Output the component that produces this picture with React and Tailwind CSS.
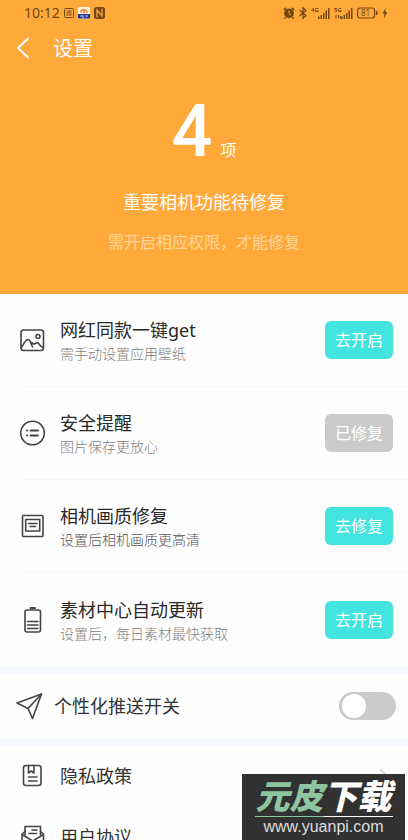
import { useState } from "react";

const lineProps = {
  fill: "none",
  stroke: "currentColor",
  strokeWidth: 1.6,
  strokeLinecap: "round",
  strokeLinejoin: "round",
};

function ImageIcon() {
  return (
    <svg width="26" height="26" viewBox="0 0 26 26" {...lineProps}>
      <rect x="1" y="3" width="22.500" height="20.500" rx="2.500" />
      <circle cx="18" cy="9.500" r="2" />
      <path d="M2 20C4 16 5.500 12.500 8 12.500S11 17 12.500 20M10.700 16C12 14.500 13 17.500 14.500 17S16.500 15 18 16S20.500 20 23 20.500" />
    </svg>
  );
}

function ListIcon() {
  return (
    <svg width="26" height="26" viewBox="0 0 26 26" {...lineProps}>
      <circle cx="12.500" cy="13" r="11.800" />
      <path d="M10.500 10.500H18M10.500 15.500H18" strokeWidth="1.900" />
      <path d="M7 10.500H7.200M7 15.500H7.200" strokeWidth="1.900" />
    </svg>
  );
}

function FrameIcon() {
  return (
    <svg width="26" height="26" viewBox="0 0 26 26" {...lineProps}>
      <rect x="2.500" y="2.500" width="20.500" height="21" rx="1" />
      <rect x="5.700" y="6.500" width="14" height="11.500" />
      <path d="M8.500 10.500H17M10 13.500H15.500" />
    </svg>
  );
}

function BatteryIcon() {
  return (
    <svg width="26" height="26" viewBox="0 0 26 26" {...lineProps}>
      <rect x="5" y="3" width="15.500" height="22" rx="2" />
      <path d="M10.500 1H15" strokeWidth="2" />
      <path d="M7.500 14.500H18M7.500 18H18M7.500 21.500H18" />
    </svg>
  );
}

function SendIcon() {
  return (
    <svg width="28" height="28" viewBox="0 0 28 28" {...lineProps}>
      <path d="M1 11L25.500 2L16.500 26.500L12 16.500Z" />
      <path d="M12 16.500L25.500 2" />
    </svg>
  );
}

function PolicyIcon() {
  return (
    <svg width="26" height="26" viewBox="0 0 26 26" {...lineProps}>
      <rect x="3.500" y="2.500" width="17.500" height="20" rx="2.500" />
      <path d="M8.500 2.500V10L11.200 8L14 10V2.500M8.500 14H17M8.500 18H17" />
    </svg>
  );
}

function LetterIcon() {
  return (
    <svg width="26" height="26" viewBox="0 0 26 26" {...lineProps}>
      <path d="M5 11V2.500H20.500V11M9 9.500H16.500M12 6H17" />
      <path d="M5 7.500L2 10V23.500H23.500V10L20.500 7.500M2 10.500L12.700 17L23.500 10.500" />
    </svg>
  );
}

function Signal({ label, lower }) {
  return (
    <svg width="19" height="12" viewBox="0 0 19 12" fill="currentColor">
      <text x="0" y="5" fontSize="6" fontWeight="700">
        {label}
      </text>
      {lower && <path d="M1 9.500L2.500 7.500V11.500H1.500V9.500ZM4 8H5V11.500H4ZM6 9H7V11.500H6Z" />}
      <path d="M7 9.500H8.500V12H7ZM9.500 8H11V12H9.500ZM12 6H13.500V12H12ZM14.500 3.500H16V12H14.500ZM17 1H18.500V12H17Z" />
    </svg>
  );
}

function StatusBar() {
  return (
    <div className="flex h-6 items-center justify-between pl-6 pr-5 pt-[2px] text-[#754710]">
      <div className="flex items-center gap-1">
        <span className="text-sm leading-5">10:12</span>
        <svg width="10" height="10" viewBox="0 0 10 10" fill="none" stroke="currentColor">
          <rect x="0.500" y="0.500" width="9" height="9" rx="1" />
          <path d="M2 3H8M2 5H8M2 7H8M4 2V8M6 2V8" strokeWidth="0.600" />
        </svg>
        <svg width="12" height="12" viewBox="0 0 12 12">
          <rect width="12" height="12" rx="1" fill="#fff3e2" />
          <path d="M2 5.500C2 2 4 3 4.500 1.500C6 3 8 1 8 3C10 3 10 5 9.500 6Z" fill="#ef8c42" />
          <circle cx="4.500" cy="4.500" r="0.700" fill="#fff" />
          <circle cx="7.500" cy="4.500" r="0.700" fill="#fff" />
          <rect y="7" width="12" height="4.500" fill="#25308e" />
          <path d="M2 9H4M5 8V11M7 9H10" stroke="#fff" strokeWidth="0.800" />
        </svg>
        <svg width="11" height="12" viewBox="0 0 11 12">
          <rect width="11" height="12" rx="2.500" fill="currentColor" />
          <path d="M3 10.500V3L8 9V1.500" fill="none" stroke="#ffa93b" strokeWidth="1.200" />
        </svg>
      </div>
      <div className="flex items-center gap-1">
        <svg width="12" height="12" viewBox="0 0 12 12">
          <circle cx="6" cy="6.300" r="4.900" fill="currentColor" />
          <path
            d="M0.700 3L3 0.900M11.300 3L9 0.900M2.500 10.500L1.500 11.700M9.500 10.500L10.500 11.700"
            stroke="currentColor"
            strokeWidth="1.600"
          />
          <path d="M6 3.500V6.500L8 8" fill="none" stroke="#ffa93b" />
        </svg>
        <svg width="8" height="12" viewBox="0 0 8 12" fill="none" stroke="currentColor" strokeWidth="1.200">
          <path d="M0.500 3L7 8.500L4 11.300V0.700L7 3.500L0.500 9" />
        </svg>
        <Signal label="4G" />
        <Signal label="5G" lower />
        <svg width="21" height="12" viewBox="0 0 21 12" fill="none" stroke="currentColor">
          <rect x="0.600" y="1" width="17" height="10" rx="2.500" strokeWidth="1.200" />
          <path d="M19.800 4V8" strokeWidth="1.500" />
          <text x="4" y="9" fontSize="8" fill="currentColor" stroke="none">
            81
          </text>
        </svg>
        <svg width="6" height="10" viewBox="0 0 6 10" fill="currentColor">
          <path d="M3.500 0L0.500 5.500H2.500L2 10L5.500 4.200H3.500Z" />
        </svg>
      </div>
    </div>
  );
}

const features = [
  { icon: ImageIcon, title: "网红同款一键get", desc: "需手动设置应用壁纸", action: "去开启" },
  { icon: ListIcon, title: "安全提醒", desc: "图片保存更放心", action: "已修复", done: true },
  { icon: FrameIcon, title: "相机画质修复", desc: "设置后相机画质更高清", action: "去修复", dark: true },
  { icon: BatteryIcon, title: "素材中心自动更新", desc: "设置后，每日素材最快获取", action: "去开启" },
];

const links = [
  { icon: PolicyIcon, title: "隐私政策" },
  { icon: LetterIcon, title: "用户协议" },
];

function FeatureRow({ item }) {
  const Icon = item.icon;
  return (
    <li className="ml-5 flex h-[93px] items-center border-b border-[#f7f7f7] pr-[15px] last:border-0">
      <Icon />
      <div className="ml-[14px] flex-1 pt-1">
        <h3 className="text-lg leading-6 text-[#292929]">{item.title}</h3>
        <p
          className={
            item.dark
              ? "text-sm leading-6 font-light text-[#555555]"
              : "text-sm leading-6 font-light text-[#808080]"
          }
        >
          {item.desc}
        </p>
      </div>
      <button
        type="button"
        className={
          item.done
            ? "h-[38px] w-[68px] rounded-md bg-[#cbcbcb] text-base text-white"
            : "h-[38px] w-[68px] rounded-md bg-[#43e4df] text-base text-white"
        }
      >
        {item.action}
      </button>
    </li>
  );
}

export default function App() {
  const [push, setPush] = useState(false);

  return (
    <div className="relative h-screen overflow-hidden bg-[#fefefe] font-['Noto_Sans','Noto_Sans_CJK_SC',sans-serif] text-[#444444]">
      <header className="h-[294px] bg-[#ffa93b] text-white">
        <StatusBar />
        <div className="flex h-12 items-center pl-4">
          <button type="button" aria-label="返回" className="mr-[22px]">
            <svg
              width="15"
              height="22"
              viewBox="0 0 15 22"
              fill="none"
              stroke="currentColor"
              strokeWidth="2"
              strokeLinecap="round"
              strokeLinejoin="round"
            >
              <path d="M12 1.500L2 11L12 20.500" />
            </svg>
          </button>
          <h1 className="pt-[2px] text-xl">设置</h1>
        </div>
        <div className="flex flex-col items-center">
          <p className="mt-5 flex items-baseline gap-2">
            <span className="font-[Roboto] text-7xl leading-20 font-medium">4</span>
            <span className="text-base">项</span>
          </p>
          <h2 className="mt-4 text-lg leading-7">重要相机功能待修复</h2>
          <p className="mt-3 text-base leading-7 text-[#ffd598]">需开启相应权限，才能修复</p>
        </div>
      </header>

      <ul>
        {features.map((item) => (
          <FeatureRow key={item.title} item={item} />
        ))}
      </ul>

      <div className="flex h-20 items-center border-y-8 border-[#f5f8fe] pl-4 pr-3">
        <SendIcon />
        <label htmlFor="push" className="ml-[10px] flex-1 text-lg text-[#333333]">
          个性化推送开关
        </label>
        <span className="relative flex">
          <input
            id="push"
            type="checkbox"
            checked={push}
            onChange={(e) => setPush(e.target.checked)}
            className="peer h-7 w-[57px] appearance-none rounded-full bg-[#cbcbcb] checked:bg-[#43e4df]"
          />
          <span className="pointer-events-none absolute top-[2px] left-[3px] h-6 w-6 rounded-full bg-white peer-checked:left-[30px]" />
        </span>
      </div>

      <nav>
        {links.map((item) => {
          const Icon = item.icon;
          return (
            <a
              key={item.title}
              href="#"
              className="ml-5 flex h-[61px] items-center border-b border-[#f9f9f9] pr-5"
            >
              <Icon />
              <span className="ml-[14px] flex-1 text-lg text-[#333333]">{item.title}</span>
              <svg width="9" height="16" viewBox="0 0 9 16" fill="none" stroke="#cccccc" strokeWidth="1.500">
                <path d="M1 1L8 8L1 15" />
              </svg>
            </a>
          );
        })}
      </nav>

      <div className="absolute right-[3px] bottom-0 flex h-[66px] w-[163px] flex-col items-center bg-[#2d2d2d]/98 pt-1">
        <p className="flex text-[34px] leading-9 font-black text-white italic">
          <span className="text-[#8cc5a0]">元皮</span>下载
        </p>
        <div className="mt-[2px] flex h-px w-[138px]">
          <span className="flex-1 bg-[#8cc5a0]" />
          <span className="flex-1 bg-white" />
        </div>
        <p className="font-['Liberation_Sans',sans-serif] text-base leading-5 text-[#dddddd]">www.yuanpi.com</p>
      </div>
    </div>
  );
}
